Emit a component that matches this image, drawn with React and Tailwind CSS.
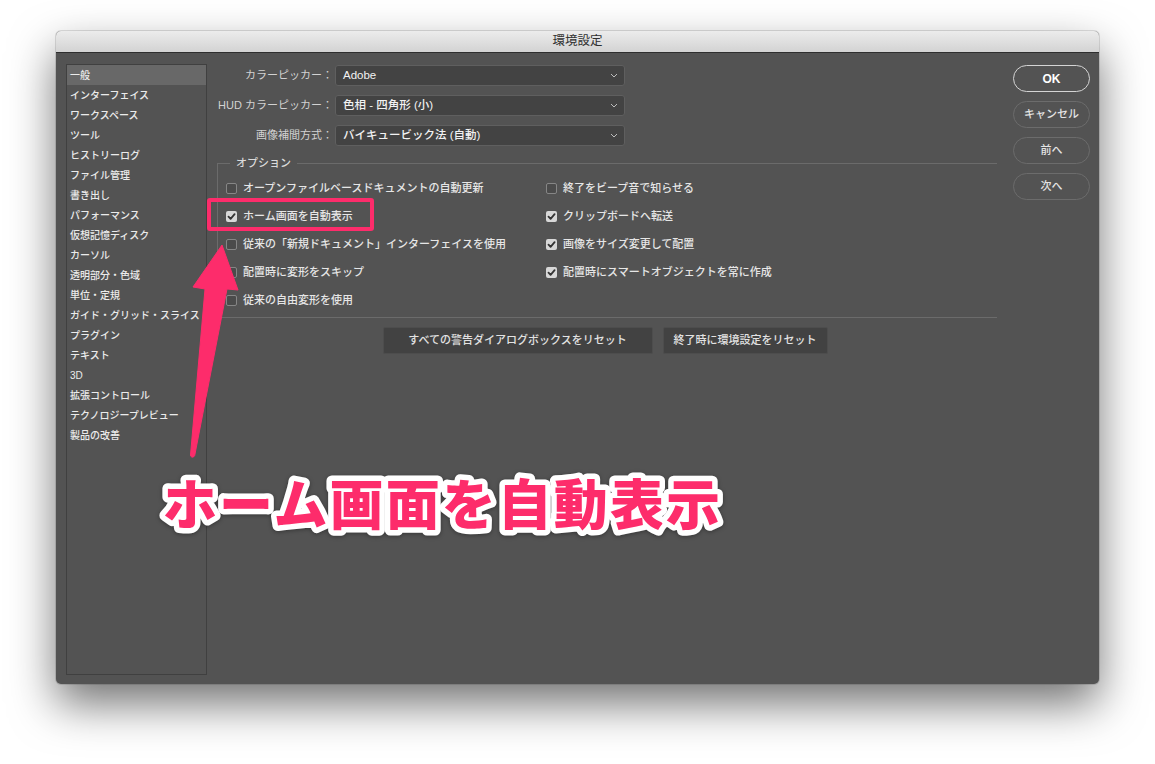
import React from "react";

const FONT = { fontFamily: "'Liberation Sans','Noto Sans CJK JP',sans-serif" };

const sidebar = [
  "一般",
  "インターフェイス",
  "ワークスペース",
  "ツール",
  "ヒストリーログ",
  "ファイル管理",
  "書き出し",
  "パフォーマンス",
  "仮想記憶ディスク",
  "カーソル",
  "透明部分・色域",
  "単位・定規",
  "ガイド・グリッド・スライス",
  "プラグイン",
  "テキスト",
  "3D",
  "拡張コントロール",
  "テクノロジープレビュー",
  "製品の改善",
];

function Chevron() {
  return (
    <svg width="8" height="5" viewBox="0 0 8 5" className="shrink-0">
      <polyline points="1,1 4,4 7,1" fill="none" stroke="#bdbdbd" strokeWidth="1" />
    </svg>
  );
}

function SelectRow({ label, value }) {
  return (
    <div className="flex items-center h-[21px]">
      <div className="w-[126px] text-right text-[11px] text-[#d2d2d2] whitespace-nowrap">{label}</div>
      <div className="ml-[2px] w-[290px] h-[21px] bg-[#434343] border border-[#5f5f5f] rounded-[3px] flex items-center justify-between pl-[7px] pr-[6px]">
        <span className="text-[11.5px] font-medium text-[#f2f2f2] whitespace-nowrap">{value}</span>
        <Chevron />
      </div>
    </div>
  );
}

function Check({ checked, label }) {
  return (
    <div className="flex items-center h-[28px]">
      {checked ? (
        <div className="w-[11px] h-[11px] rounded-[2px] bg-[#d8d8d8] flex items-center justify-center">
          <svg width="9" height="9" viewBox="0 0 9 9">
            <polyline points="1.5,4.6 3.6,6.8 7.6,2.2" fill="none" stroke="#333" strokeWidth="1.8" strokeLinecap="round" strokeLinejoin="round" />
          </svg>
        </div>
      ) : (
        <div className="w-[11px] h-[11px] rounded-[2px] border border-[#868686] bg-[#4b4b4b]" />
      )}
      <span className="ml-[6px] text-[11px] text-[#e6e6e6] font-medium whitespace-nowrap">{label}</span>
    </div>
  );
}

function PillButton({ children, primary }) {
  return (
    <div
      className={
        "h-[27px] w-[77px] rounded-full flex items-center justify-center " +
        (primary
          ? "border-[1.5px] border-[#d4d4d4] text-[12px] font-bold text-white"
          : "border border-[#6c6c6c] text-[11px] font-medium text-[#e4e4e4]")
      }
    >
      {children}
    </div>
  );
}

export default function App() {
  return (
    <div className="w-[1155px] h-[764px] bg-white relative overflow-hidden pl-[56px] pt-[31px]" style={FONT}>
      <div className="w-[1043px] h-[653px] rounded-[5px] bg-[#535353] shadow-[0_20px_45px_rgba(0,0,0,0.55),0_0_0_1px_rgba(0,0,0,0.12)] flex flex-col overflow-hidden">
        <div className="h-[22px] shrink-0 bg-gradient-to-b from-[#ececec] to-[#d3d3d3] border-b border-[#2e2e2e] flex items-center justify-center text-[12.5px] text-[#303030]">
          環境設定
        </div>
        <div className="flex-1 flex pl-[10px] pt-[11px]">
          {/* sidebar */}
          <div className="w-[141px] h-[611px] border border-[#404040] flex flex-col">
            {sidebar.map((s, i) => (
              <div
                key={s}
                className={
                  "h-[20px] shrink-0 flex items-center pl-[3px] text-[10px] font-medium text-[#ebebeb] whitespace-nowrap " +
                  (i === 0 ? "bg-[#686868]" : "")
                }
              >
                {s}
              </div>
            ))}
          </div>

          {/* main */}
          <div className="w-[806px] pt-[1px] flex flex-col">
            <div className="flex flex-col gap-[9px]">
              <SelectRow label="カラーピッカー：" value="Adobe" />
              <SelectRow label="HUD カラーピッカー：" value="色相 - 四角形 (小)" />
              <SelectRow label="画像補間方式：" value="バイキュービック法 (自動)" />
            </div>

            <div className="relative ml-[10px] mt-[17px] w-[780px] border-t border-l border-b border-[#6b6b6b] pt-[10px] pb-[3px] pl-[8px]">
              <span className="absolute -top-[9px] left-[12px] px-[6px] bg-[#535353] text-[11px] text-[#dadada] font-medium">
                オプション
              </span>
              <div className="flex">
                <div className="w-[320px] flex flex-col">
                  <Check label="オープンファイルベースドキュメントの自動更新" />
                  <Check checked label="ホーム画面を自動表示" />
                  <Check label="従来の「新規ドキュメント」インターフェイスを使用" />
                  <Check label="配置時に変形をスキップ" />
                  <Check label="従来の自由変形を使用" />
                </div>
                <div className="flex flex-col">
                  <Check label="終了をビープ音で知らせる" />
                  <Check checked label="クリップボードへ転送" />
                  <Check checked label="画像をサイズ変更して配置" />
                  <Check checked label="配置時にスマートオブジェクトを常に作成" />
                </div>
              </div>
            </div>

            <div className="ml-[8px] w-[780px] mt-[9px] flex justify-center gap-[10px]">
              <div className="w-[270px] h-[27px] bg-[#424242] border border-[#4d4d4d] rounded-[2px] flex items-center justify-center text-[11px] font-medium text-[#e2e2e2]">
                すべての警告ダイアログボックスをリセット
              </div>
              <div className="w-[165px] h-[27px] bg-[#424242] border border-[#4d4d4d] rounded-[2px] flex items-center justify-center text-[11px] font-medium text-[#e2e2e2]">
                終了時に環境設定をリセット
              </div>
            </div>
          </div>

          {/* right buttons */}
          <div className="pt-[1px] flex flex-col gap-[9px]">
            <PillButton primary>OK</PillButton>
            <PillButton>キャンセル</PillButton>
            <PillButton>前へ</PillButton>
            <PillButton>次へ</PillButton>
          </div>
        </div>
      </div>

      {/* annotation: highlight box */}
      <div className="absolute left-[207px] top-[198px] w-[167px] h-[33px] border-[4px] border-[#fd2c6b] rounded-[3px]" />

      {/* annotation: arrow + big text */}
      <svg className="absolute left-0 top-0" width="1155" height="764" viewBox="0 0 1155 764">
        <path
          d="M 190.5 455 L 205 289 L 193 287 L 222 245 L 238 290 L 227 289 L 195 454 C 195 458, 190.5 458, 190.5 455 Z"
          fill="#fd2c6b"
          stroke="#fd2c6b"
          strokeWidth="1"
          strokeLinejoin="round"
        />
        <text
          x="163"
          y="525"
          textLength="557"
          lengthAdjust="spacing"
          fontSize="54"
          fontWeight="900"
          fill="#fd2c6b"
          stroke="#ffffff"
          strokeWidth="11"
          strokeLinejoin="round"
          paintOrder="stroke"
          style={{ fontFamily: "'Noto Sans CJK JP',sans-serif", filter: "drop-shadow(0 1px 2px rgba(0,0,0,0.35))" }}
        >
          ホーム画面を自動表示
        </text>
      </svg>
    </div>
  );
}
